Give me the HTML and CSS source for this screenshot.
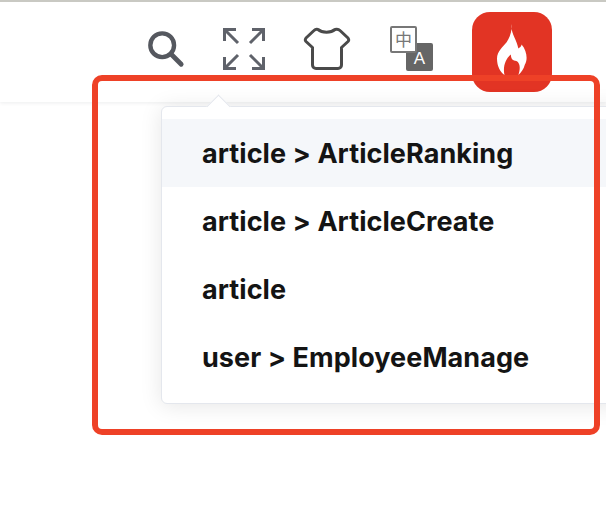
FILE: index.html
```html
<!DOCTYPE html>
<html lang="en">
<head>
<meta charset="utf-8">
<title>Search</title>
<link rel="stylesheet" href="styles.css">
</head>
<body>
<header class="navbar">
  <svg class="icon search" viewBox="0 0 40 40"><circle cx="16" cy="16" r="12.5" fill="none" stroke="#55585f" stroke-width="4.6"/><path d="M25.5 25.500L36 36" fill="none" stroke="#55585f" stroke-width="5" stroke-linecap="round"/></svg>
  <svg class="icon full" viewBox="0 0 42 42" fill="none" stroke="#5f626a" stroke-width="3"><path d="M1.500 13V1.500H13M3 3L15 15M29 1.500H40.500V13M39 3L27 15M1.500 29V40.500H13M3 39L15 27M40.500 29V40.500H29M39 39L27 27"/></svg>
  <svg class="icon shirt" viewBox="0 0 48 44"><path d="M15 2.500C19 6 28 6 32 2.500C34 2 36 2.500 37 3.500L45 11C46 12.500 46 13.500 45 14.500L38.500 20.500V38C38.500 40 37 41.500 35 41.500H13C11 41.500 9.500 40 9.500 38V20.500L3 14.500C2 13.500 2 12.500 3 11L11 3.500C12 2.500 13 2 15 2.500Z" fill="none" stroke="#4a4a4a" stroke-width="3" stroke-linejoin="round"/></svg>
  <div class="lang">
    <span class="lang-a">A</span>
    <span class="lang-zh">中</span>
  </div>
  <div class="logo">
    <svg viewBox="497 23 29 50" preserveAspectRatio="none" class="flame"><path fill="#fff" d="M511 23C509 31 515 37 517 47C518 46 520 45 520 43C525 49 526 58 523 63C522 67 520 70 517 73C519 67 519 60 514 59C511 59 510 56 510 53C506 56 502 64 504 73C500 70 497 64 497 57C497 50 503 45 506 41C509 36 511 30 511 23Z"/></svg>
  </div>
</header>
<div class="popover">
  <ul class="list">
    <li class="item active">article &gt; ArticleRanking</li>
    <li class="item">article &gt; ArticleCreate</li>
    <li class="item">article</li>
    <li class="item">user &gt; EmployeeManage</li>
  </ul>
</div>
<div class="frame"></div>
</body>
</html>
```
FILE: styles.css
```css
* { box-sizing: border-box; }
html, body { margin: 0; height: 100%; }
body {
  position: relative;
  overflow: hidden;
  background: #fff;
  font-family: Inter, "Liberation Sans", Arial, sans-serif;
}
.navbar {
  height: 102px;
  border-top: 2px solid #c9c9c3;
  box-shadow: 0 1px 4px rgba(0, 21, 41, 0.08);
  display: flex;
  align-items: flex-start;
  padding-left: 147px;
}
.icon { display: block; flex: none; }
.search { width: 38px; height: 38px; margin-top: 28px; }
.full { width: 42px; height: 42px; margin: 26px 0 0 38px; }
.shirt { width: 48px; height: 44px; margin: 25px 0 0 38px; }
.lang { position: relative; width: 44px; height: 46px; margin: 24px 0 0 39px; flex: none; }
.lang-zh {
  position: absolute; left: 0; top: 0;
  width: 27px; height: 27px;
  background: #fff;
  border: 2.5px solid #777;
  border-radius: 2px;
  color: #777;
  font: 17px/22px "Noto Sans CJK SC", sans-serif;
  text-align: center;
}
.lang-a {
  position: absolute; left: 16px; top: 17px;
  width: 27px; height: 28px;
  background: #666;
  border-radius: 2px;
  color: #fff;
  font-family: "Liberation Sans", sans-serif;
  font-size: 17px;
  line-height: 32px;
  text-align: center;
}
.logo {
  width: 80px; height: 80px;
  margin: 10px 0 0 38px;
  flex: none;
  background: #e23424;
  border-radius: 18px;
  display: flex;
  justify-content: center;
  padding-top: 12px;
}
.flame { width: 31px; height: 51px; }
.popover {
  position: absolute;
  left: 161px; top: 106px;
  width: 460px; height: 298px;
  background: #fff;
  border: 1px solid #e4e7ed;
  border-radius: 6px;
  padding: 12px 0;
  box-shadow: 0 2px 22px rgba(0, 0, 0, 0.1);
}
.popover::before {
  content: "";
  position: absolute;
  left: 48px; top: -9px;
  width: 16px; height: 16px;
  background: #fff;
  border: 1px solid #e4e7ed;
  border-right: 0; border-bottom: 0;
  transform: rotate(45deg);
}
.list { list-style: none; margin: 0; padding: 0; }
.item {
  height: 68px;
  padding-left: 40px;
  font-size: 27px;
  font-weight: 700;
  letter-spacing: 0.06px;
  line-height: 70px;
  color: #141414;
}
.active { background: #f5f7fa; }
.frame {
  position: absolute;
  left: 92px; top: 75px;
  width: 508px; height: 360px;
  border: 6px solid #ee4127;
  border-radius: 10px;
}
```
